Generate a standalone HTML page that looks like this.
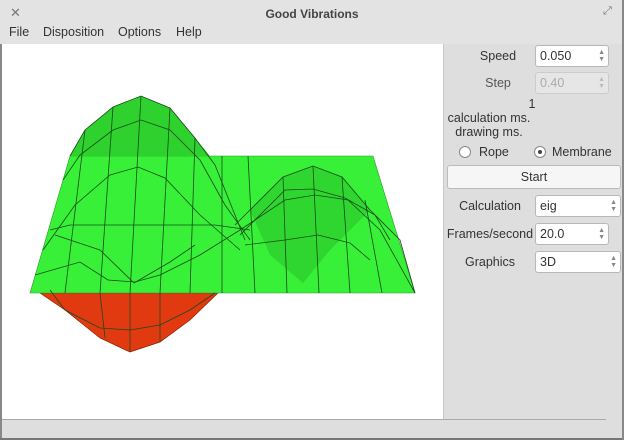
<!DOCTYPE html>
<html><head><style>
body{margin:0;width:624px;height:440px;overflow:hidden;background:#dedede;font-family:"Liberation Sans","DejaVu Sans",sans-serif;font-size:12px;color:#333;position:relative}
.abs{position:absolute;white-space:nowrap}
.title{left:0;top:0;width:624px;height:24px;background:#e3e3e3;text-align:center;font-weight:bold;line-height:28px;color:#444;font-size:12px}
.menu{top:24px;left:0;width:624px;height:20px;background:#e3e3e3}
.menu span{position:absolute;top:1px;font-size:12.5px;color:#333}
.canvas{left:2px;top:44px;width:441px;height:375px;background:#fff}
.lbl{text-align:center;font-size:12.5px}
.box{background:#fff;border:1px solid #b8b8b8;border-radius:3px;height:22px;width:74px;box-sizing:border-box;padding-left:4px;line-height:21px;font-size:12.5px}
.arr{position:absolute;right:3px;top:3px;font-size:7px;line-height:7px;color:#888}
.radio{width:12px;height:12px;border:1px solid #888;border-radius:50%;background:#fff;box-sizing:border-box}
</style></head><body>
<div class="abs" style="left:0;top:0;width:2px;height:440px;background:#888"></div>
<div class="abs title">Good Vibrations</div>
<div class="abs" style="left:10px;top:5px;color:#777;font-size:13px">✕</div>
<div class="abs" style="left:603px;top:5px;color:#777;font-size:11px">⤢</div>
<div class="abs menu"><span style="left:9px">File</span><span style="left:43px">Disposition</span><span style="left:118px">Options</span><span style="left:176px">Help</span></div>
<div class="abs canvas">
<svg width="441" height="375" viewBox="2 44 441 375">
<polygon points="40,293 65,310 100,338 130,352 160,342 190,320 218,293" fill="#e23a10" stroke="#8a2000" stroke-width="0.7"/>
<polygon points="70,156 373,156 415,293 30,293" fill="#37f037" stroke="#2a9a2a" stroke-width="0.6"/>
<polygon points="70,156 85,130 113,107 141,96 170,108 195,138 210,156" fill="#2ed12e"/>
<polygon points="250,210 283,177 313,166 342,177 370,210 330,250 303,283 270,255" fill="#2ed12e" opacity="0.85"/>
<g fill="none" stroke="#1a4a1a" stroke-width="0.8">
<polyline points="70,156 85,130 113,107 141,96 170,108 195,138 215,165 235,215 245,240"/>
<polyline points="63,180 80,155 113,130 141,120 170,130 200,160 225,205 250,240"/>
<polyline points="43,250 75,205 110,175 138,167 165,178 200,215 240,250"/>
<polyline points="35,275 80,262 108,280 135,282 160,275 200,255 240,230 285,200 315,195 348,200 380,230 415,293"/>
<polyline points="50,230 70,225 215,225 250,230"/>
<polyline points="55,235 100,250 134,283 170,262 195,245"/>
<polyline points="50,290 65,310 100,328 130,330 160,325 190,310 215,293"/>
<polyline points="235,225 250,210 283,177 313,166 342,177 370,210 400,240 415,293"/>
<polyline points="240,235 285,190 313,189 345,198 375,215 390,240"/>
<polyline points="245,245 285,240 318,235 350,243 370,260"/>
<line x1="113" y1="107" x2="100" y2="293"/><line x1="141" y1="96" x2="130" y2="293"/><line x1="170" y1="108" x2="160" y2="293"/>
<line x1="85" y1="130" x2="65" y2="293"/><line x1="195" y1="138" x2="190" y2="293"/>
<line x1="222" y1="156" x2="222" y2="293"/><line x1="248" y1="156" x2="255" y2="293"/>
<line x1="283" y1="177" x2="287" y2="293"/><line x1="313" y1="166" x2="319" y2="293"/><line x1="342" y1="177" x2="350" y2="293"/><line x1="365" y1="200" x2="382" y2="293"/>
<line x1="105" y1="338" x2="100" y2="293"/><line x1="130" y1="352" x2="130" y2="293"/><line x1="160" y1="342" x2="160" y2="293"/>
</g>
</svg>
</div>
<div class="abs" style="left:443px;top:44px;width:1px;height:376px;background:#c8c8c8"></div>
<div class="abs lbl" style="left:470px;top:49px;width:56px">Speed</div>
<div class="abs box" style="left:535px;top:45px">0.050<span class="arr">▲<br>▼</span></div>
<div class="abs lbl" style="left:470px;top:76px;width:56px;color:#555">Step</div>
<div class="abs box" style="left:535px;top:72px;background:#e6e6e6;color:#aaa;border-color:#ccc">0.40<span class="arr" style="color:#bbb">▲<br>▼</span></div>
<div class="abs lbl" style="left:520px;top:97px;width:24px">1</div>
<div class="abs lbl" style="left:444px;top:111px;width:90px;line-height:14px">calculation ms.<br>drawing ms.</div>
<div class="abs radio" style="left:459px;top:146px"></div>
<div class="abs" style="left:479px;top:145px;font-size:12.5px">Rope</div>
<div class="abs radio" style="left:534px;top:146px"><div style="width:4px;height:4px;background:#444;border-radius:50%;margin:3px"></div></div>
<div class="abs" style="left:552px;top:145px;font-size:12.5px">Membrane</div>
<div class="abs" style="left:447px;top:165px;width:174px;height:24px;background:#f6f6f6;border:1px solid #bbb;border-radius:3px;box-sizing:border-box;text-align:center;line-height:22px;font-size:12.5px">Start</div>
<div class="abs lbl" style="left:450px;top:199px;width:80px">Calculation</div>
<div class="abs box" style="left:535px;top:195px;width:86px">eig<span class="arr">▲<br>▼</span></div>
<div class="abs lbl" style="left:446px;top:227px;width:88px">Frames/second</div>
<div class="abs box" style="left:535px;top:223px">20.0<span class="arr">▲<br>▼</span></div>
<div class="abs lbl" style="left:450px;top:255px;width:80px">Graphics</div>
<div class="abs box" style="left:535px;top:251px;width:86px">3D<span class="arr">▲<br>▼</span></div>
<div class="abs" style="left:2px;top:419px;width:604px;height:1px;background:#aaa"></div>
<div class="abs" style="left:0;top:438px;width:624px;height:2px;background:#777"></div>
<div class="abs" style="left:622px;top:0;width:2px;height:440px;background:#888"></div>
</body></html>
